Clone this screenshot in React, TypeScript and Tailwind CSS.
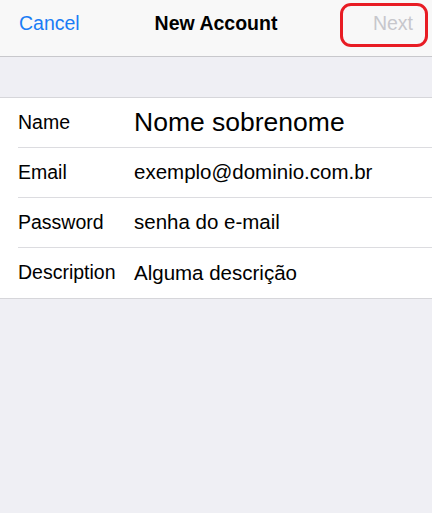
const ROWS = [
  { label: "Name", value: "Nome sobrenome", big: true },
  { label: "Email", value: "exemplo@dominio.com.br" },
  { label: "Password", value: "senha do e-mail" },
  { label: "Description", value: "Alguma descrição" },
];

export default function App() {
  return (
    <div className="h-[513px] w-[432px] bg-[#efeff4] font-['Liberation_Sans',Arial,sans-serif] text-black">
      <header className="relative grid h-[57px] grid-cols-[1fr_auto_1fr] items-center border-b border-[#c8c8cc] bg-[#f8f8f8] px-[19px] pb-[8px]">
        <span className="text-[19.5px] text-[#1a7cf5]">Cancel</span>
        <span className="text-[19.5px] font-bold">New Account</span>
        <span className="text-right text-[19.5px] text-[#c7c7cc]">Next</span>
        <div className="absolute left-[340px] top-[3px] h-[44px] w-[88px] rounded-[11px] border-[3px] border-[#e81c24]" />
      </header>

      <div className="h-[40px]" />

      <div className="border-y border-[#d6d6da] bg-white">
        {ROWS.map((row, i) => (
          <div key={row.label} className="pl-[18px]">
            <div
              className={`flex h-[50px] items-center ${
                i < ROWS.length - 1 ? "border-b border-[#dcdce0]" : ""
              }`}
            >
              <span className="w-[116px] text-[19.5px]">{row.label}</span>
              <span className={row.big ? "text-[26.5px]" : "text-[20.5px]"}>{row.value}</span>
            </div>
          </div>
        ))}
      </div>
    </div>
  );
}
